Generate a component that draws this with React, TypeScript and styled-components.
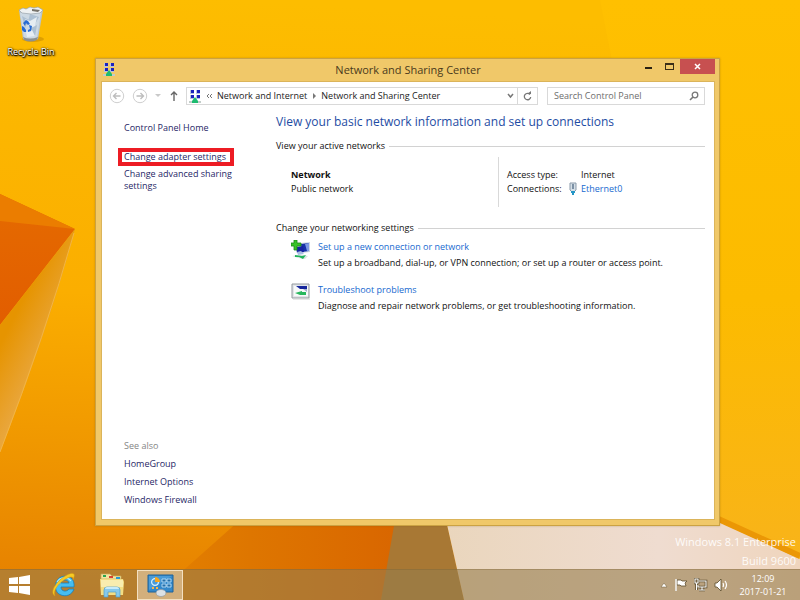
import React from "react";
import styled, { createGlobalStyle, css } from "styled-components";

const GlobalStyle = createGlobalStyle`
  * { box-sizing: border-box; }
  html, body, #root { height: 100%; margin: 0; }
  body { font: 9px/12px "Open Sans", "Noto Sans", sans-serif; color: #111; overflow: hidden; }
  button { font: inherit; padding: 0; border: 0; background: none; color: inherit; }
  svg { display: block; flex: none; }
  h1, h2, p, ul, dl, dd { margin: 0; padding: 0; }
`;

const Screen = styled.div`
  position: relative;
  isolation: isolate;
  display: flex;
  flex-direction: column;
  height: 100%;
  min-height: 480px;
`;

const WallpaperSvg = styled.svg`
  position: absolute;
  inset: 0;
  z-index: -1;
  width: 100%;
  height: 100%;
`;

const Desktop = styled.main`
  position: relative;
  flex: 1;
  padding: 6px 0 0 5px;
`;

const DesktopIcon = styled.button`
  display: flex;
  flex-direction: column;
  align-items: center;
  width: 52px;
  gap: 3px;
  color: #fff;
  text-shadow: 0 1px 1px #000, 1px 1px 2px #000, 0 0 2px #000;
`;

const Watermark = styled.p`
  position: absolute;
  right: 4px;
  bottom: -1px;
  z-index: 0;
  text-align: right;
  font-size: 11px;
  line-height: 19px;
  color: rgba(255, 255, 255, 0.9);
`;

const Window = styled.section`
  position: absolute;
  inset: 58px 80px 43px 95px;
  z-index: 1;
  display: flex;
  flex-direction: column;
  padding: 0 4px 5px 5px;
  background: #f0c869;
  border: 1px solid #cba243;
  box-shadow: 0 0 2px rgba(120, 80, 0, 0.35);
`;

const TitleBar = styled.header`
  display: grid;
  grid-template-columns: 70px 1fr 70px;
  align-items: start;
  height: 22px;
`;

const TitleIcon = styled.span`
  padding: 4px 0 0 2px;
`;

const Title = styled.h1`
  text-align: center;
  font-size: 11px;
  font-weight: 400;
  line-height: 22px;
  color: #4a3a1c;
`;

const Captions = styled.div`
  display: flex;
  justify-content: flex-end;
  height: 15px;
`;

const CaptionButton = styled.button<{ $close?: boolean }>`
  display: flex;
  align-items: center;
  justify-content: center;
  width: ${(p) => (p.$close ? 35 : 21)}px;
  flex: none;
  ${(p) => p.$close && css`background: #c75050;`}
`;

const Client = styled.div`
  flex: 1;
  display: flex;
  flex-direction: column;
  min-height: 0;
  background: #fff;
  border: 1px solid #dbb45a;
`;

const NavBar = styled.div`
  display: flex;
  align-items: center;
  height: 28px;
  padding: 0 9px 0 7px;
`;

const NavButton = styled.button<{ $width: number }>`
  display: flex;
  align-items: center;
  justify-content: center;
  width: ${(p) => p.$width}px;
  height: 18px;
`;

const AddressBar = styled.nav`
  display: flex;
  flex: 348 1 0;
  align-items: center;
  height: 18px;
  border: 1px solid #d9d9d9;
  padding-left: 2px;
`;

const Crumb = styled.a`
  color: #222;
  text-decoration: none;
  white-space: nowrap;
`;

const CrumbMark = styled.span<{ $wide?: boolean }>`
  display: flex;
  justify-content: center;
  width: ${(p) => (p.$wide ? 16 : 14)}px;
`;

const AddressButton = styled.button<{ $divided?: boolean }>`
  display: flex;
  align-items: center;
  justify-content: center;
  width: ${(p) => (p.$divided ? 20 : 14)}px;
  height: 16px;
  ${(p) => p.$divided ? css`border-left: 1px solid #d9d9d9;` : css`margin-left: auto;`}
`;

const SearchBox = styled.label`
  display: flex;
  flex: 145 1 0;
  align-items: center;
  height: 18px;
  margin-left: 9px;
  padding: 0 5px 0 6px;
  border: 1px solid #d9d9d9;
`;

const SearchInput = styled.input`
  flex: 1;
  min-width: 0;
  padding: 0;
  border: 0;
  outline: 0;
  font: inherit;
  background: none;
  &::placeholder { color: #6d6d6d; opacity: 1; }
`;

const Body = styled.div`
  flex: 1;
  display: grid;
  grid-template-columns: 174px 1fr;
  min-height: 0;
`;

const Sidebar = styled.aside`
  display: flex;
  flex-direction: column;
  align-items: flex-start;
  padding: 12px 40px 13px 22px;
`;

const SideLink = styled.a<{ $marked?: boolean }>`
  color: #1f1f66;
  text-decoration: none;
  ${(p) => p.$marked && css`
    margin: 14px -6px 2px;
    padding: 0 4px 0 2px;
    border: 4px solid #ed1c24;
    line-height: 10px;
    white-space: nowrap;
  `}
`;

const SeeAlso = styled.div`
  display: flex;
  flex-direction: column;
  gap: 6px;
  margin-top: auto;
  color: #858585;
`;

const Content = styled.div`
  padding: 4px 9px 0 0;
`;

const Heading = styled.h2`
  font-size: 12px;
  font-weight: 400;
  line-height: 16px;
  color: #1e4ca3;
`;

const SectionTitle = styled.h2<{ $top: number }>`
  display: flex;
  align-items: center;
  gap: 4px;
  margin-top: ${(p) => p.$top}px;
  font-size: 9px;
  font-weight: 400;
  line-height: 12px;
  &::after { content: ""; flex: 1; border-top: 1px solid #d2d2d2; }
`;

const NetworkRow = styled.div`
  display: grid;
  grid-template-columns: 223fr 206fr;
  height: 50px;
  margin-top: 5px;
  line-height: 14px;
`;

const NetworkName = styled.div`
  padding: 11px 0 0 15px;
  border-right: 1px solid #d9d9d9;
`;

const Details = styled.dl`
  display: grid;
  grid-template-columns: 62px 12px 1fr;
  grid-auto-rows: 14px;
  align-content: start;
  padding: 11px 0 0 8px;
`;

const Value = styled.dd`
  grid-column: 3;
`;

const Link = styled.a`
  color: #1769cf;
  text-decoration: none;
`;

const Actions = styled.ul`
  display: grid;
  gap: 13px;
  margin-top: 6px;
  padding-left: 15px;
  list-style: none;
`;

const Action = styled.li`
  display: grid;
  grid-template-columns: 20px 1fr;
  column-gap: 7px;
  line-height: 14px;
`;

const ActionText = styled.div`
  display: flex;
  flex-direction: column;
  align-items: flex-start;
  gap: 2px;
`;

const Taskbar = styled.footer`
  display: flex;
  align-items: stretch;
  height: 31px;
  padding-right: 13px;
  background: rgba(150, 125, 77, 0.6);
  border-top: 1px solid rgba(120, 90, 40, 0.3);
  color: #fff;
`;

const TaskButton = styled.button<{ $active?: boolean }>`
  display: flex;
  align-items: center;
  justify-content: center;
  width: 46px;
  margin-right: 2px;
  ${(p) => p.$active && css`
    background: rgba(238, 220, 196, 0.52);
    border: 1px solid rgba(255, 240, 215, 0.75);
  `}
`;

const StartButton = styled(TaskButton)`
  width: 39px;
`;

const Tray = styled.div`
  display: flex;
  align-items: center;
  gap: 6px;
  margin-left: auto;
`;

const TrayButton = styled.button`
  display: flex;
`;

const Clock = styled.button`
  width: 48px;
  margin-left: 5px;
  line-height: 13px;
  text-align: center;
  white-space: nowrap;
`;

const Wallpaper = () => (
  <WallpaperSvg viewBox="0 0 800 600" preserveAspectRatio="none" aria-hidden="true">
    <defs>
      <linearGradient id="base" x1=".3" y1="0" x2=".22" y2="1">
        <stop offset="0" stopColor="#fdbd00" />
        <stop offset=".5" stopColor="#fbae00" />
        <stop offset=".75" stopColor="#f09800" />
        <stop offset="1" stopColor="#e68000" />
      </linearGradient>
      <linearGradient id="right" x1="0" y1="0" x2="0" y2="1">
        <stop offset="0" stopColor="#ffc000" />
        <stop offset=".5" stopColor="#fcbb00" />
        <stop offset="1" stopColor="#f8b21e" />
      </linearGradient>
      <linearGradient id="fold" x1="0" y1="0" x2="0" y2="1">
        <stop offset="0" stopColor="#e56b00" />
        <stop offset="1" stopColor="#e25d00" />
      </linearGradient>
      <linearGradient id="beam" gradientUnits="userSpaceOnUse" x1="5" y1="335" x2="45" y2="355">
        <stop offset="0" stopColor="#e69400" />
        <stop offset="1" stopColor="#e9a63c" />
      </linearGradient>
      <linearGradient id="floor" x1="0" y1="0" x2="1" y2="0">
        <stop offset="0" stopColor="#e48100" />
        <stop offset=".4" stopColor="#de7600" />
        <stop offset="1" stopColor="#d96600" />
      </linearGradient>
      <linearGradient id="paper" x1="0" y1="0" x2="1" y2="0">
        <stop offset="0" stopColor="#ead6bd" />
        <stop offset=".6" stopColor="#efdcd0" />
        <stop offset="1" stopColor="#efd5bd" />
      </linearGradient>
    </defs>
    <path d="M0 0H800V600H0Z" fill="url(#base)" />
    <path d="M600 0H800V600H720Z" fill="url(#right)" />
    <path d="M0 194 75 229 0 325Z" fill="url(#fold)" />
    <path d="M0 194 75 229 0 221Z" fill="#eb7d00" />
    <path d="M75 229 0 325V452Q48 330 75 229Z" fill="url(#beam)" />
    <path d="M74 233Q46 332 0 452" fill="none" stroke="#f2b545" />
    <path d="M240 520H400L381 600H150Z" fill="url(#floor)" />
    <path d="M395 520H446L464 600H381Z" fill="#a87834" />
    <path d="M446 520H715L800 559V600H464Z" fill="url(#paper)" />
    <path d="M714 517 800 556" fill="none" stroke="#eb9705" strokeWidth="6" />
  </WallpaperSvg>
);

const RecycleBin = () => (
  <svg width="30" height="37" viewBox="0 0 30 37" aria-hidden="true">
    <ellipse cx="17" cy="33" rx="11" ry="3" fill="#a66c00" opacity=".35" />
    <path d="M3 4 7 33Q14 37 22 33L27 4Z" fill="#b9c5cf" />
    <path d="M4 7 8 32Q14 35 21 32L25 7Z" fill="#cdd9e3" />
    <path d="m6 10 7 4-4 8ZM14 8l9 3-5 9-6-4ZM15 22l6-3-2 11-6-1Z" fill="#adc0d2" />
    <path d="m9 13 5 2 7-4-2 9-5 2ZM10 26l6-2 3 6-8 1Z" fill="#e6edf2" />
    <path d="m3 4 4-2 3 1 4-2 4 1 4-1 5 3-3 3-9 1L6 7Z" fill="#eef1f2" stroke="#9aa4ab" strokeWidth=".7" />
    <path d="m16 3 8 1-2 2-6-1Z" fill="#77736a" />
    <path d="m7 17 3-3 2 1 2 3-2 1-2-2-1 3ZM13 19l3 1-1 5-3 1v-2l2-1ZM6 20l2 1 2 3v2H8l-2-2Z" fill="#286bd2" />
    <path d="M7 31Q14 34 22 31L21 34Q14 37 8 34Z" fill="#8d918f" />
  </svg>
);

const NetIcon = () => (
  <svg width="12" height="13" viewBox="0 0 12 13" aria-hidden="true">
    <path d="M1 0h4v4H1ZM7 0h4v4H7ZM1 5h4v4H1ZM7 5h4v4H7Z" fill="#b9c4dc" />
    <path d="M2 0h3v3H2ZM8 0h3v3H8ZM2 5h3v3H2ZM8 5h3v3H8Z" fill="#1b22bd" />
    <path d="M0 11h12v2H0Z" fill="#c3cdc9" />
    <path d="m6 7 3 4v2H3v-2Z" fill="#1dbb70" />
  </svg>
);

const Arrow = ({ flip }: { flip?: boolean }) => (
  <svg width="16" height="16" viewBox="0 0 16 16" aria-hidden="true">
    <circle cx="8" cy="8" r="6.7" fill="#fff" stroke="#cfcfcf" />
    <path d={flip ? "M4.5 8h7M8.5 5l3 3-3 3" : "M11.5 8h-7M7.5 5l-3 3 3 3"} fill="none" stroke="#bdbdbd" strokeWidth="1.4" />
  </svg>
);

const ConnectIcon = () => (
  <svg width="20" height="20" viewBox="0 0 20 20" aria-hidden="true">
    <path d="M9 3 19 2V12L10 13Z" fill="#cdd6e2" />
    <path d="m10 4 8-1v8l-7 1Z" fill="#1730a8" />
    <path d="m14 4 4-1v8l-2 0Z" fill="#7c98e4" />
    <path d="m5 7 7-1 1 6-7 1Z" fill="#1524a0" />
    <path d="m6 12 4-1 3 3-6 1Z" fill="#a9bde2" />
    <path d="M1 16q8-2 16 0l-3 3-7-1Z" fill="#dbe4e2" />
    <path d="m4 15 7 1 4-1-3 4-4-2-4 0Z" fill="#22b45c" />
    <path d="M3 0h3v3h4v3H6v4H3V6H0V3h3Z" fill="#38c226" stroke="#198916" strokeWidth=".8" />
  </svg>
);

const TroubleIcon = () => (
  <svg width="20" height="17" viewBox="0 0 20 17" aria-hidden="true">
    <path d="M1 1h17v14H1Z" fill="#e1e5e8" stroke="#92989e" />
    <path d="M3 3h14v10H3Z" fill="#f7f9fa" />
    <path d="m5 3 11 0v3l-7 0Z" fill="#16269c" />
    <path d="M12 6h4v3Z" fill="#a0b0cd" />
    <path d="m4 10 7-2v1h4v3H9Z" fill="#28b75e" />
    <path d="M2 16h17" stroke="#cfd2d4" />
  </svg>
);

const EthernetIcon = () => (
  <svg width="8" height="13" viewBox="0 0 8 13" aria-hidden="true">
    <path d="M1 1h6v7L5 10H3L1 8Z" fill="#d5dfe7" stroke="#8b9baa" />
    <path d="M3 2h2v5H3Z" fill="#7c91a5" />
    <path d="M2 9h4v2H2ZM3 11h2v2H3Z" fill="#2596c6" />
  </svg>
);

const IeIcon = () => (
  <svg width="26" height="26" viewBox="0 0 26 26" aria-hidden="true">
    <path d="M23 15H10c0 5 6 5 8 2h5c-2 6-8 8-13 6C2 20 3 8 10 5c8-3 14 2 13 10ZM10 11h8c-1-4-7-4-8 0Z" fill="#45bdf0" stroke="#197eb7" strokeWidth=".8" />
    <path d="M6 10c3-5 10-6 14-1" fill="none" stroke="#a9edff" strokeWidth="1.2" />
    <path d="M4 24C-1 21 3 13 10 7S25-1 23 5l-1 3c1-4-3-4-9 0C6 13 2 19 4 24Z" fill="#f8cb23" stroke="#d59a12" strokeWidth=".5" />
  </svg>
);

const FolderIcon = () => (
  <svg width="26" height="25" viewBox="0 0 26 25" aria-hidden="true">
    <path d="M2 3V1h9l2 2h9v3H2Z" fill="#f3e5a0" stroke="#c6ad5a" strokeWidth=".7" />
    <path d="M4 2h3v2H4Z" fill="#28a54e" />
    <path d="M10 3h4v2h-4Z" fill="#d84132" />
    <path d="M17 4h4v2h-4Z" fill="#2899cf" />
    <path d="M1 6h23l1 3-1 13H2Z" fill="#f3dd83" />
    <path d="M2 7h22v7H2Z" fill="#f9edaf" />
    <path d="M5 24v-7q0-3 3-3h10q3 0 3 3v7h-4v-5H9v5Z" fill="#85c9ec" stroke="#529ec8" strokeWidth=".7" />
    <path d="M6 16q0-2 2-2h10q2 0 2 2Z" fill="#c6ebfb" />
  </svg>
);

const ControlIcon = () => (
  <svg width="27" height="23" viewBox="0 0 27 23" aria-hidden="true">
    <path d="M1 1h25v17H1Z" fill="#3488c9" stroke="#1f6298" />
    <path d="M2 2h23L2 16Z" fill="#4b9bd7" />
    <circle cx="8" cy="8" r="3.4" fill="none" stroke="#d8f1ff" strokeWidth="1.2" />
    <path d="M8 8V3A5 5 0 0 1 13 8Z" fill="#f8a51d" />
    <path d="M15 5h4v3h-4ZM20 5h4v3h-4ZM15 10h4v3h-4ZM20 10h4v3h-4Z" fill="#276fa8" stroke="#c5e9ff" strokeWidth=".8" />
    <path d="M5 14h2M9 14h2" stroke="#ffb743" strokeWidth="2" />
    <ellipse cx="14" cy="19" rx="5" ry="3.5" fill="#dce1e5" stroke="#929ba3" strokeWidth=".7" />
  </svg>
);

export default function App() {
  return (
    <Screen>
      <GlobalStyle />
      <Wallpaper />
      <Desktop>
        <DesktopIcon><RecycleBin />Recycle Bin</DesktopIcon>
        <Watermark>Windows 8.1 Enterprise<br />Build 9600</Watermark>
        <Window aria-label="Network and Sharing Center">
          <TitleBar>
            <TitleIcon><NetIcon /></TitleIcon>
            <Title>Network and Sharing Center</Title>
            <Captions>
              <CaptionButton aria-label="Minimize">
                <svg width="9" height="9"><path d="M1 5h7v2H1Z" fill="#292112" /></svg>
              </CaptionButton>
              <CaptionButton aria-label="Maximize">
                <svg width="9" height="9"><path d="M0 1h9v7H0ZM1 3v4h7V3Z" fill="#3a2e17" fillRule="evenodd" /></svg>
              </CaptionButton>
              <CaptionButton $close aria-label="Close">
                <svg width="7" height="7"><path d="m1 1 5 5M6 1 1 6" stroke="#fff" strokeWidth="1.5" /></svg>
              </CaptionButton>
            </Captions>
          </TitleBar>
          <Client>
            <NavBar>
              <NavButton $width={16} aria-label="Back"><Arrow /></NavButton>
              <NavButton $width={29} aria-label="Forward"><Arrow flip /></NavButton>
              <NavButton $width={8} aria-label="Recent pages">
                <svg width="6" height="4"><path d="M0 0h6L3 3Z" fill="#c9c9c9" /></svg>
              </NavButton>
              <NavButton $width={24} aria-label="Up">
                <svg width="8" height="10"><path d="M4 10V1M1 4l3-3 3 3" fill="none" stroke="#666" strokeWidth="1.4" /></svg>
              </NavButton>
              <AddressBar aria-label="Address">
                <NetIcon />
                <CrumbMark $wide>
                  <svg width="7" height="6"><path d="M3 1 1 3l2 2M6 1 4 3l2 2" fill="none" stroke="#777" /></svg>
                </CrumbMark>
                <Crumb href="#internet">Network and Internet</Crumb>
                <CrumbMark><svg width="4" height="6"><path d="m1 0 3 3-3 3Z" fill="#777" /></svg></CrumbMark>
                <Crumb href="#center">Network and Sharing Center</Crumb>
                <AddressButton aria-label="Previous locations">
                  <svg width="7" height="6"><path d="m1 1 2.5 3L6 1" fill="none" stroke="#777" strokeWidth="1.5" /></svg>
                </AddressButton>
                <AddressButton $divided aria-label="Refresh">
                  <svg width="9" height="10"><path d="M7 3.5A3.2 3.2 0 1 0 7.700 6" fill="none" stroke="#777" strokeWidth="1.3" /><path d="M4 3h4V0Z" fill="#777" /></svg>
                </AddressButton>
              </AddressBar>
              <SearchBox>
                <SearchInput aria-label="Search Control Panel" placeholder="Search Control Panel" />
                <svg width="10" height="10"><circle cx="6" cy="4" r="2.8" fill="none" stroke="#777" strokeWidth="1.3" /><path d="M4 6 1 9" stroke="#777" strokeWidth="1.6" /></svg>
              </SearchBox>
            </NavBar>
            <Body>
              <Sidebar>
                <SideLink href="#home">Control Panel Home</SideLink>
                <SideLink href="#adapter" $marked>Change adapter settings</SideLink>
                <SideLink href="#advanced">Change advanced sharing settings</SideLink>
                <SeeAlso>
                  <span>See also</span>
                  <SideLink href="#homegroup">HomeGroup</SideLink>
                  <SideLink href="#options">Internet Options</SideLink>
                  <SideLink href="#firewall">Windows Firewall</SideLink>
                </SeeAlso>
              </Sidebar>
              <Content>
                <Heading>View your basic network information and set up connections</Heading>
                <SectionTitle $top={10}>View your active networks</SectionTitle>
                <NetworkRow>
                  <NetworkName><strong>Network</strong><br />Public network</NetworkName>
                  <Details>
                    <dt>Access type:</dt><Value>Internet</Value>
                    <dt>Connections:</dt><EthernetIcon /><Value><Link href="#ethernet">Ethernet0</Link></Value>
                  </Details>
                </NetworkRow>
                <SectionTitle $top={15}>Change your networking settings</SectionTitle>
                <Actions>
                  <Action>
                    <ConnectIcon />
                    <ActionText>
                      <Link href="#setup">Set up a new connection or network</Link>
                      <p>Set up a broadband, dial-up, or VPN connection; or set up a router or access point.</p>
                    </ActionText>
                  </Action>
                  <Action>
                    <TroubleIcon />
                    <ActionText>
                      <Link href="#troubleshoot">Troubleshoot problems</Link>
                      <p>Diagnose and repair network problems, or get troubleshooting information.</p>
                    </ActionText>
                  </Action>
                </Actions>
              </Content>
            </Body>
          </Client>
        </Window>
      </Desktop>
      <Taskbar>
        <StartButton aria-label="Start">
          <svg width="21" height="20"><path d="M0 3 9 2v7H0ZM10 2 21 0v9H10ZM0 11h9v7l-9-1ZM10 11h11v9l-11-2Z" fill="#fff" /></svg>
        </StartButton>
        <TaskButton aria-label="Internet Explorer"><IeIcon /></TaskButton>
        <TaskButton aria-label="File Explorer"><FolderIcon /></TaskButton>
        <TaskButton $active aria-label="Network and Sharing Center"><ControlIcon /></TaskButton>
        <Tray>
          <TrayButton aria-label="Show hidden icons">
            <svg width="8" height="6"><path d="m1 5 3-4 3 4Z" fill="#fff" stroke="#6f5b35" strokeWidth=".5" /></svg>
          </TrayButton>
          <TrayButton aria-label="Action Center">
            <svg width="14" height="14"><path d="M2 13V1M3 2h4l1 1 5 0-2 2 1 3H7L6 7H3Z" fill="#fff" stroke="#5e4d2c" strokeWidth=".8" /><path d="M2 1v12" stroke="#fff" strokeWidth="1.5" /></svg>
          </TrayButton>
          <TrayButton aria-label="Network">
            <svg width="14" height="14" fill="none"><path d="M5 3h7v6H4V7M8 9v3M5 12h6M1 1h3v4H1ZM2.500 5v7" stroke="#584829" strokeWidth="2.6" /><path d="M5 3h7v6H4V7M8 9v3M5 12h6M1 1h3v4H1ZM2.500 5v7" stroke="#fff" strokeWidth="1.1" /></svg>
          </TrayButton>
          <TrayButton aria-label="Volume">
            <svg width="14" height="14" fill="none"><path d="M1 5h2l4-4v12L3 9H1Z" fill="#fff" stroke="#594929" strokeWidth=".8" /><path d="M9 5q1 2 0 4M11 3q3 4 0 8" stroke="#fff" strokeWidth="1.2" /></svg>
          </TrayButton>
          <Clock>12:09<br />2017-01-21</Clock>
        </Tray>
      </Taskbar>
    </Screen>
  );
}
